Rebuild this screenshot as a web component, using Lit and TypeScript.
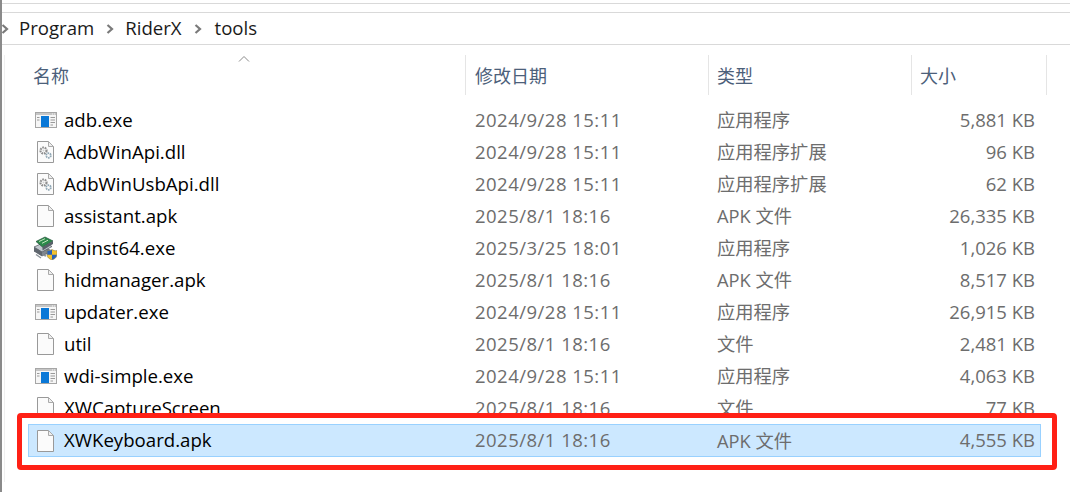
import { LitElement, html, css, svg } from "lit";
import { customElement } from "lit/decorators.js";

type Kind = "exe" | "dll" | "file" | "setup";
interface Row { name: string; date: string; type: string; size: string; icon: Kind; }

const rows: Row[] = [
  { name: "adb.exe", date: "2024/9/28 15:11", type: "应用程序", size: "5,881 KB", icon: "exe" },
  { name: "AdbWinApi.dll", date: "2024/9/28 15:11", type: "应用程序扩展", size: "96 KB", icon: "dll" },
  { name: "AdbWinUsbApi.dll", date: "2024/9/28 15:11", type: "应用程序扩展", size: "62 KB", icon: "dll" },
  { name: "assistant.apk", date: "2025/8/1 18:16", type: "APK 文件", size: "26,335 KB", icon: "file" },
  { name: "dpinst64.exe", date: "2025/3/25 18:01", type: "应用程序", size: "1,026 KB", icon: "setup" },
  { name: "hidmanager.apk", date: "2025/8/1 18:16", type: "APK 文件", size: "8,517 KB", icon: "file" },
  { name: "updater.exe", date: "2024/9/28 15:11", type: "应用程序", size: "26,915 KB", icon: "exe" },
  { name: "util", date: "2025/8/1 18:16", type: "文件", size: "2,481 KB", icon: "file" },
  { name: "wdi-simple.exe", date: "2024/9/28 15:11", type: "应用程序", size: "4,063 KB", icon: "exe" },
  { name: "XWCaptureScreen", date: "2025/8/1 18:16", type: "文件", size: "77 KB", icon: "file" },
];
const selected: Row = { name: "XWKeyboard.apk", date: "2025/8/1 18:16", type: "APK 文件", size: "4,555 KB", icon: "file" };

const page = svg`<path d="M4.5 1.5H15.5L20.5 6.5V22.5H4.5Z" fill="#fbfbfb" stroke="#999"/><path d="M15.5 1.5V6.5H20.5Z" fill="#efefef" stroke="#aaa"/>`;

const icons: Record<Kind, unknown> = {
  file: svg`<svg class="ic" width="24" height="24" viewBox="0 0 24 24">${page}</svg>`,
  dll: svg`<svg class="ic" width="24" height="24" viewBox="0 0 24 24">${page}
    <g fill="none"><circle cx="10.5" cy="10.5" r="3" stroke="#8f8f8f" stroke-width="2.2" stroke-dasharray="1.7 .8"/><circle cx="15.5" cy="15.5" r="2.3" stroke="#8fa6b4" stroke-width="1.8" stroke-dasharray="1.5 .7"/></g>
    <circle cx="10.5" cy="10.5" r="1" fill="#d0d0d0"/></svg>`,
  exe: svg`<svg class="ic" width="24" height="24" viewBox="0 0 24 24">
    <rect x="2.5" y="4.5" width="21" height="15" fill="#f6f6f6" stroke="#a6a6a6"/>
    <rect x="3" y="5" width="20" height="2" fill="#c6c6c6"/>
    <path d="M19 6H20M21 6H22" stroke="#f4f4f4"/>
    <rect x="8" y="8" width="8" height="11" fill="#0a78d7"/>
    <path d="M4 9.5H6.5M4 12H6.5M17.5 9.5H22M17.5 12H22M17.5 14.5H22M17.5 17H20" stroke="#9a9a9a"/></svg>`,
  setup: svg`<svg class="ic" width="24" height="24" viewBox="0 0 24 24">
    <path d="M1 15L11 11L19 15L9 20Z" fill="#7f868e" stroke="#4e555c" stroke-width=".7"/>
    <path d="M1 11L11 6.5L19 10.5L9 16Z" fill="#c2c8cf" stroke="#4e555c" stroke-width=".7"/>
    <path d="M1 11V15L9 20V16Z" fill="#5f666e"/>
    <path d="M3 5.5L12 1L20 5L9.5 11Z" fill="#2d8a4c" stroke="#1f4f36" stroke-width=".7"/>
    <path d="M6 5.5L12 2.7M9 7.3L15 4.2" stroke="#c3e6bd" stroke-width="1"/>
    <path d="M9.5 11L20 5V8L9.5 14.5Z" fill="#59616a"/>
    <path d="M3 18.5L8 22M10 19L13 20" stroke="#8b9299" stroke-width="1.4"/>
    <path d="M14 14.5C16 15 17.5 14.5 19 13.5C20.5 14.5 22 15 24 14.5V19C24 21.5 21.5 23 19 24C16.5 23 14 21.5 14 19Z" fill="#f4c32c" stroke="#7d7348" stroke-width=".5"/>
    <path d="M19 13.8C17.5 14.7 16 15.1 14.2 14.7V18.8H19ZM19 18.8H23.8C23.8 21.2 21.5 22.8 19 23.8Z" fill="#2a62b8"/></svg>`,
};

@customElement("app-root")
export class AppRoot extends LitElement {
  static styles = css`
    :host {
      display: block;
      width: 1070px;
      height: 492px;
      overflow: hidden;
      background: #fff;
      font-family: "Open Sans", "Noto Sans", "Noto Sans CJK SC", sans-serif;
      font-size: 18.5px;
      color: #000;
    }
    .window {
      height: 492px;
      box-sizing: border-box;
      border-left: 2px solid #8a8a8a;
      padding-top: 3px;
    }
    .topline {
      height: 8px;
      border-top: 1px solid #d9d9d9;
      border-bottom: 1px solid #d9d9d9;
    }
    .crumbs {
      height: 31px;
      display: flex;
      align-items: center;
      border-bottom: 1px solid #d9d9d9;
      color: #1a1a1a;
      font-size: 18.6px;
      padding-left: 17px;
      position: relative;
    }
    .crumbs span { padding-bottom: 2px; }
    .crumbs span:last-of-type { margin-left: 2px; }
    .crumbs .sep {
      width: 10px;
      margin: 0 10px 0 11px;
      display: block;
    }
    .crumbs .edge {
      position: absolute;
      left: -2px;
      top: 10px;
    }
    .list {
      margin: 10px 0 0 2px;
      border-left: 1px solid #f0f0f0;
      height: 427px;
      box-sizing: border-box;
    }
    .head {
      display: grid;
      grid-template-columns: 461px 243px 203px 135px;
      height: 40px;
      position: relative;
      color: #4c607a;
      font-size: 18px;
    }
    .head > div {
      border-right: 1px solid #e5e5e5;
      display: flex;
      align-items: center;
      padding-left: 8px;
      box-sizing: border-box;
    }
    .head > div:first-of-type { padding-left: 28px; }
    .head > div:nth-of-type(2) { padding-left: 9px; }
    .arrow {
      position: absolute;
      left: 233px;
      top: 0;
    }
    .rows { margin-top: 9px; margin-left: 23px; width: 1013px; }
    .row {
      display: grid;
      grid-template-columns: 36px 411px 242px 1fr 110px;
      align-items: center;
      height: 32px;
      box-sizing: border-box;
      color: #6d6d6d;
    }
    .row > div { padding-bottom: 2px; white-space: nowrap; }
    .row .name { color: #000; font-size: 18.65px; }
    .row .size { text-align: right; padding-right: 6px; }
    .row .date { letter-spacing: 0.48px; }
    .row .type { font-size: 18.3px; }
    .ic { display: block; margin-left: 5px; }
    .callout {
      position: relative;
      box-sizing: border-box;
      margin: -11px 0 0 -11px;
      width: 1040px;
      padding: 6px 0 8px 6px;
      border: 5px solid #ff2015;
      border-radius: 4px;
      background: #fff;
    }
    .row.sel {
      background: #cce8ff;
      border: 1px solid #99d1ff;
      height: 33px;
      width: 1013px;
      grid-template-columns: 35px 411px 242px 1fr 110px;
    }
    .row.sel .ic { margin-left: 4px; }
    .row.sel .size { padding-right: 5px; }
  `;

  private renderRow(r: Row, cls = "") {
    return html`<div class="row ${cls}">
      ${icons[r.icon]}
      <div class="name">${r.name}</div>
      <div class="date">${r.date}</div>
      <div class="type">${r.type}</div>
      <div class="size">${r.size}</div>
    </div>`;
  }

  render() {
    const chev = svg`<svg class="sep" width="10" height="12" viewBox="0 0 10 12"><path d="M2.5 2L7 6L2.5 10" fill="none" stroke="#7a7a7a" stroke-width="2.2"/></svg>`;
    return html`<div class="window">
      <div class="topline"></div>
      <div class="crumbs">
        <svg class="edge" width="10" height="12" viewBox="0 0 10 12"><path d="M2.5 2L7 6L2.5 10" fill="none" stroke="#7a7a7a" stroke-width="2.2"/></svg>
        <span>Program</span>${chev}<span>RiderX</span>${chev}<span>tools</span>
      </div>
      <div class="list">
        <div class="head">
          <div>名称</div><div>修改日期</div><div>类型</div><div>大小</div>
          <svg class="arrow" width="12" height="8" viewBox="0 0 12 8"><path d="M1 6.5L6 1.5L11 6.5" fill="none" stroke="#8a8a8a"/></svg>
        </div>
        <div class="rows">
          ${rows.map((r) => this.renderRow(r))}
          <div class="callout">${this.renderRow(selected, "sel")}</div>
        </div>
      </div>
    </div>`;
  }
}
